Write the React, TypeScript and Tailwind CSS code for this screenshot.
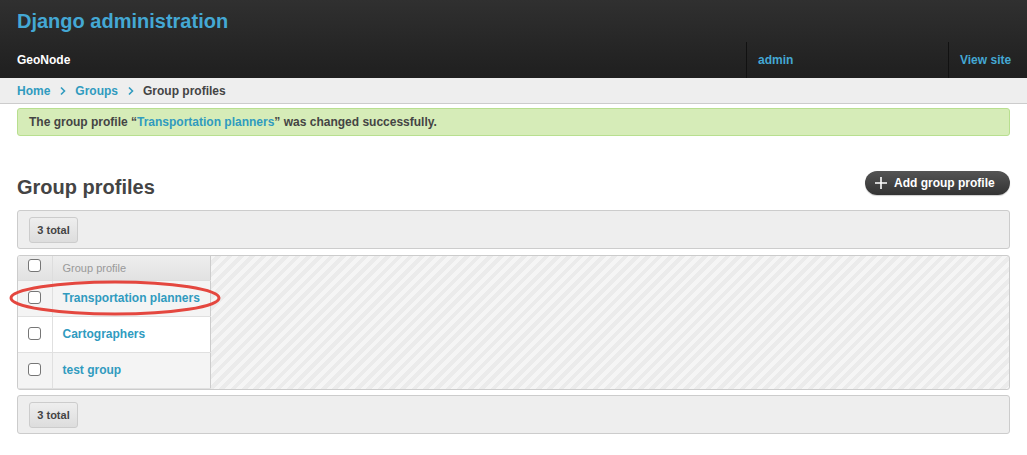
import React from "react";

type Row = { name: string; odd: boolean };

const rows: Row[] = [
  { name: "Transportation planners", odd: true },
  { name: "Cartographers", odd: false },
  { name: "test group", odd: true },
];

function Chevron() {
  return (
    <svg width="8" height="10" viewBox="0 0 8 10" className="ml-[9px] mr-[8px]">
      <path d="M2 1.5 L5.5 5 L2 8.5" fill="none" stroke="#309bbf" strokeWidth="1.6" />
    </svg>
  );
}

function Box({ children }: { children: React.ReactNode }) {
  return (
    <div className="h-[39px] rounded-[3px] border border-[#ccc] bg-[#eee] pl-[11px] pt-[6px]">
      <span className="inline-flex h-[26px] w-[49px] items-center justify-center rounded-[3px] border border-[#ccc] bg-gradient-to-b from-[#eee] to-[#ddd] text-[11px] font-bold text-[#444]">
        {children}
      </span>
    </div>
  );
}

function Check() {
  return (
    <span className="inline-block h-[13px] w-[13px] rounded-[3px] border border-[#767676] bg-white" />
  );
}

export default function App() {
  return (
    <div className="min-h-[455px] bg-white font-['Liberation_Sans',Arial,sans-serif] text-[#444]">
      {/* Header */}
      <header className="bg-gradient-to-b from-[#303030] to-[#1f1f1f]">
        <div className="flex h-[42px] items-center px-[17px]">
          <h1 className="text-[20px] font-bold leading-none text-[#44a8d4]">Django administration</h1>
        </div>
        <div className="flex h-[36px] items-center text-[12px] font-bold">
          <div className="flex-1 pl-[17px] text-white">GeoNode</div>
          <div className="flex h-full w-[202px] items-center border-l border-[#111] pl-[11px] text-[#44a8d4]">admin</div>
          <div className="flex h-full w-[79px] items-center border-l border-[#111] pl-[11px] text-[#44a8d4]">View site</div>
        </div>
      </header>

      {/* Breadcrumbs */}
      <nav className="flex h-[26px] items-center border-b border-[#ccc] bg-[#eee] px-[17px] text-[12px] font-bold">
        <span className="text-[#309bbf]">Home</span>
        <Chevron />
        <span className="text-[#309bbf]">Groups</span>
        <Chevron />
        <span className="text-[#444]">Group profiles</span>
      </nav>

      <main className="px-[17px]">
        <div className="mt-[4px] flex h-[28px] items-center rounded-[3px] border border-[#b8df8f] bg-[#d6ecb8] pl-[11px] text-[12px] font-bold text-[#444]">
          The group profile “<span className="text-[#309bbf]">Transportation planners</span>” was changed successfully.
        </div>

        <div className="mt-[35px] flex items-start justify-between">
          <h2 className="mt-[6px] text-[20px] font-bold leading-none text-[#444]">Group profiles</h2>
          <button className="flex h-[24px] w-[145px] items-center rounded-full bg-gradient-to-b from-[#555] to-[#333] pl-[9px] text-[12px] font-bold text-white shadow-[0_1px_1px_rgba(0,0,0,0.2)]">
            <svg width="14" height="14" viewBox="0 0 14 14" className="mr-[6px]">
              <path d="M7 1 V13 M1 7 H13" stroke="white" strokeWidth="1.6" />
            </svg>
            Add group profile
          </button>
        </div>

        <div className="mt-[13px]">
          <Box>3 total</Box>
        </div>

        {/* Changelist */}
        <div className="relative mt-[6px]">
          <div className="flex overflow-hidden rounded-[3px] border border-[#ccc] bg-[repeating-linear-gradient(135deg,#f5f5f5_0px,#f5f5f5_4px,#ebebeb_4px,#ebebeb_8px)]">
            <table className="w-[193px] border-collapse border-r border-[#ccc] text-[12px]">
              <thead>
                <tr className="h-[24px] bg-gradient-to-b from-[#eee] to-[#e2e2e2]">
                  <th className="w-[34px] border-r border-b border-[#ddd] p-0 text-center align-middle">
                    <Check />
                  </th>
                  <th className="border-b border-[#ddd] pl-[10px] text-left text-[11px] font-normal text-[#999]">Group profile</th>
                </tr>
              </thead>
              <tbody>
                {rows.map((r) => (
                  <tr key={r.name} className={r.odd ? "h-[36px] bg-[#f4f4f4]" : "h-[36px] bg-white"}>
                    <td className="border-r border-b border-[#e0e0e0] p-0 pt-[2px] text-center align-top">
                      <span className="mt-[8px] inline-block">
                        <Check />
                      </span>
                    </td>
                    <td className="border-b border-[#e0e0e0] pl-[10px] align-middle font-bold text-[#309bbf]">
                      {r.name}
                    </td>
                  </tr>
                ))}
              </tbody>
            </table>
            <div className="flex-1" />
          </div>

          {/* Red annotation ellipse */}
          <svg className="pointer-events-none absolute left-[-10px] top-[23px]" width="220" height="40" viewBox="0 0 220 40">
            <ellipse cx="108" cy="20" rx="104" ry="16" fill="none" stroke="#e4473f" strokeWidth="3" />
          </svg>
        </div>

        <div className="mt-[5px]">
          <Box>3 total</Box>
        </div>
      </main>
    </div>
  );
}
